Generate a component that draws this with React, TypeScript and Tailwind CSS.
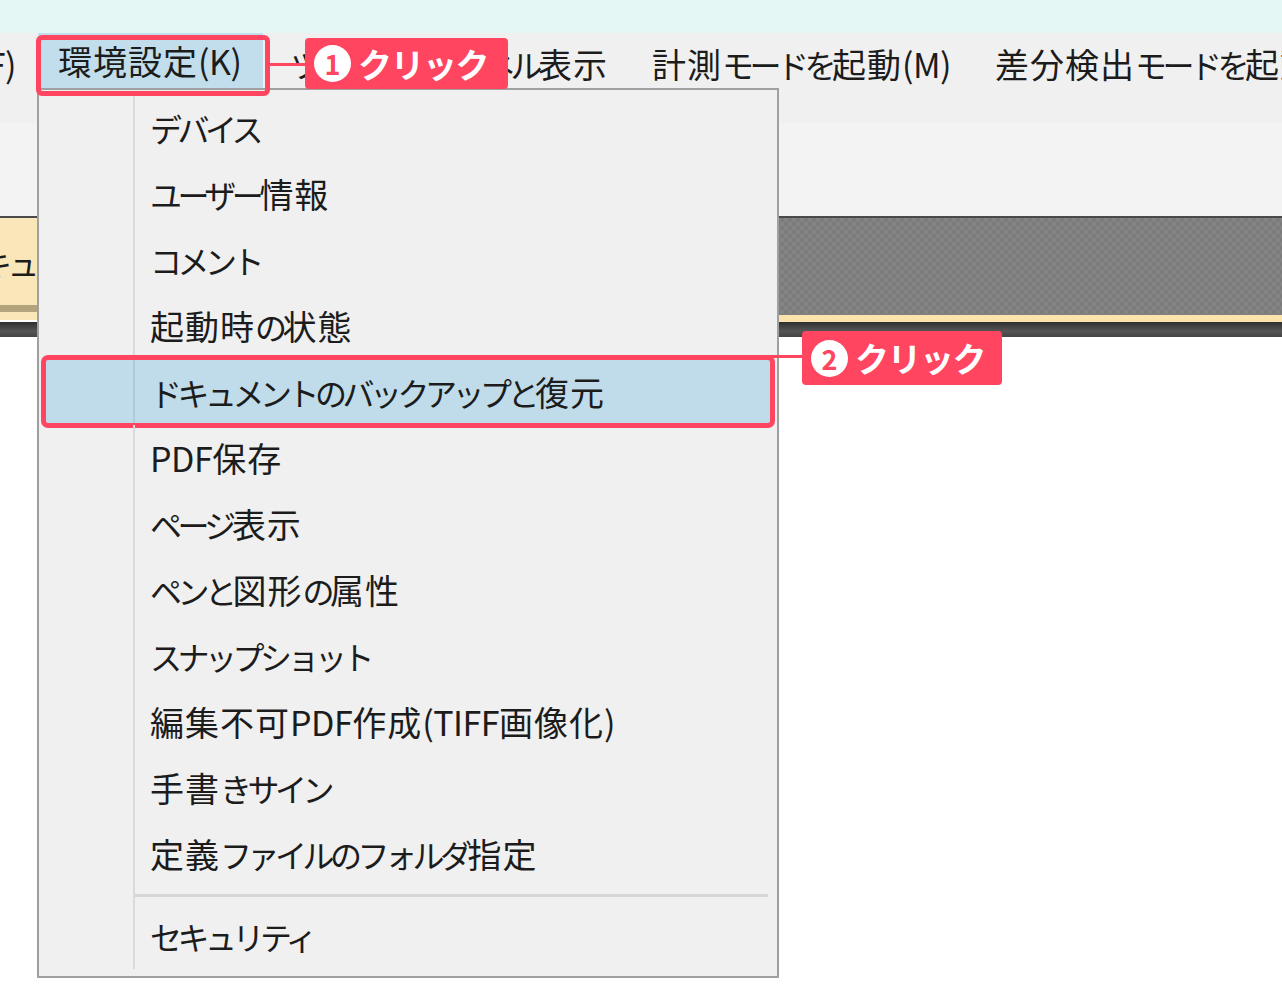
const menuItems = [
  "デバイス",
  "ユーザー情報",
  "コメント",
  "起動時の状態",
  "ドキュメントのバックアップと復元",
  "PDF保存",
  "ページ表示",
  "ペンと図形の属性",
  "スナップショット",
  "編集不可PDF作成(TIFF画像化)",
  "手書きサイン",
  "定義ファイルのフォルダ指定",
];

const jp = "font-['Noto_Sans_CJK_JP','Noto_Sans',sans-serif]";

// Meiryo UI look: narrow kana, full-width kanji, normal latin
function UiText({ text }: { text: string }) {
  const runs = text.match(/[\u4e00-\u9fff]+|[\x00-\x7f]+|[^\u4e00-\u9fff\x00-\x7f]+/g) || [];
  return (
    <span className="whitespace-nowrap">
      {runs.map((run, i) => {
        if (/^[\u4e00-\u9fff]/.test(run))
          return (
            <span key={i} className="text-[34px] tracking-[1px]">
              {run}
            </span>
          );
        if (/^[\x00-\x7f]/.test(run))
          return (
            <span key={i} className="text-[34px] tracking-[-0.5px]">
              {run}
            </span>
          );
        return (
          <span key={i} className="text-[32px] tracking-[-4.5px]">
            {run}
          </span>
        );
      })}
    </span>
  );
}

function Callout({ num, className }: { num: string; className: string }) {
  return (
    <div
      className={`absolute flex items-center gap-[7px] rounded-[4px] bg-[#ff4560] pl-[9px] text-white ${className}`}
    >
      <span className="flex h-[37px] w-[37px] items-center justify-center rounded-full bg-white text-[27px] font-bold leading-none text-[#ff4560]">
        {num}
      </span>
      <span className="text-[34px] font-bold leading-none tracking-[-1.5px]">クリック</span>
    </div>
  );
}

export default function App() {
  return (
    <div className={`relative h-[997px] w-[1282px] overflow-hidden bg-white text-[#1c1c1c] ${jp}`}>
      {/* window title strip */}
      <div className="h-[33px] bg-[#e4f7f5]" />

      {/* menu bar */}
      <div className="flex h-[90px] items-start overflow-hidden bg-[#f0f0f0] leading-none">
        <div className="flex h-[62px] w-[38px] shrink-0 items-center justify-end overflow-hidden pr-[22px]">
          <UiText text="(F)" />
        </div>
        <div className="flex h-[58px] w-[225px] shrink-0 items-center border-b-[3px] border-[#2c9ad8] bg-[#c2deec] pl-[20px]">
          <UiText text="環境設定(K)" />
        </div>
        <div className="flex h-[62px] w-[345px] shrink-0 items-center justify-end overflow-hidden">
          <UiText text="ツールバーとパネル表示" />
        </div>
        <div className="flex h-[62px] w-[387px] shrink-0 items-center pl-[44px]">
          <UiText text="計測モードを起動(M)" />
        </div>
        <div className="flex h-[62px] shrink-0 items-center">
          <UiText text="差分検出モードを起動" />
        </div>
      </div>

      {/* toolbar area */}
      <div className="h-[93px] bg-[#f3f3f3]" />

      {/* tab band */}
      <div className="h-[2px] bg-[#4a4a4a]" />
      <div className="flex">
        <div className="flex w-[300px] flex-col">
          <div className="flex h-[87px] items-center overflow-hidden bg-[#f9e6b9] leading-none">
            <span className="-ml-[20px]">
              <UiText text="キュメント" />
            </span>
          </div>
          <div className="h-[7px] bg-[#b4a47e]" />
          <div className="h-[8px] bg-[#f9e6b9]" />
        </div>
        <div className="flex flex-1 flex-col">
          <div className="h-[97px] bg-[repeating-conic-gradient(#848484_0_25%,#7c7c7c_0_50%)] bg-[length:8px_8px]" />
          <div className="h-[7px] bg-[#fbe3ab]" />
        </div>
      </div>
      <div className="h-[15px] bg-[linear-gradient(#2f2f2f,#555_60%,#444)]" />

      {/* dropdown menu */}
      <div className="absolute left-[37px] top-[88px] w-[742px] border-2 border-[#a0a0a0] bg-[#f0f0f0] px-[3px] pb-[7px] pt-[5px] leading-none">
        {menuItems.map((item, i) => (
          <div key={item} className={`relative flex h-[66px] ${i === 4 ? "bg-[#c0dcea]" : ""}`}>
            <div className="w-[91px]" />
            <div className={`w-[2px] ${i === 4 ? "bg-[#aecbd9]" : "bg-[#dadada]"}`} />
            <div className="flex items-center pl-[15px]">
              <UiText text={item} />
            </div>
            {i === 4 && (
              <div className="absolute -bottom-[3px] -left-[1px] -right-[1px] -top-[4px] rounded-[7px] border-[5px] border-[#ff4560]" />
            )}
          </div>
        ))}
        <div className="flex h-[16px]">
          <div className="w-[91px]" />
          <div className="w-[2px] bg-[#dadada]" />
          <div className="flex flex-1 items-center pr-[6px]">
            <div className="h-[3px] w-full bg-[#d6d6d6]" />
          </div>
        </div>
        <div className="flex h-[66px]">
          <div className="w-[91px]" />
          <div className="w-[2px] bg-[#dadada]" />
          <div className="flex items-center pl-[15px]">
            <UiText text="セキュリティ" />
          </div>
        </div>
      </div>

      {/* annotations */}
      <div className="absolute left-[36px] top-[35px] h-[61px] w-[234px] rounded-[6px] border-[5px] border-[#ff4560]" />
      <div className="absolute left-[270px] top-[63px] h-[3px] w-[36px] bg-[#ff4560]" />
      <Callout num="1" className="left-[305px] top-[38px] h-[51px] w-[203px]" />

      <div className="absolute left-[763px] top-[355px] h-[3px] w-[40px] bg-[#ff4560]" />
      <Callout num="2" className="left-[802px] top-[331px] h-[54px] w-[200px]" />
    </div>
  );
}
